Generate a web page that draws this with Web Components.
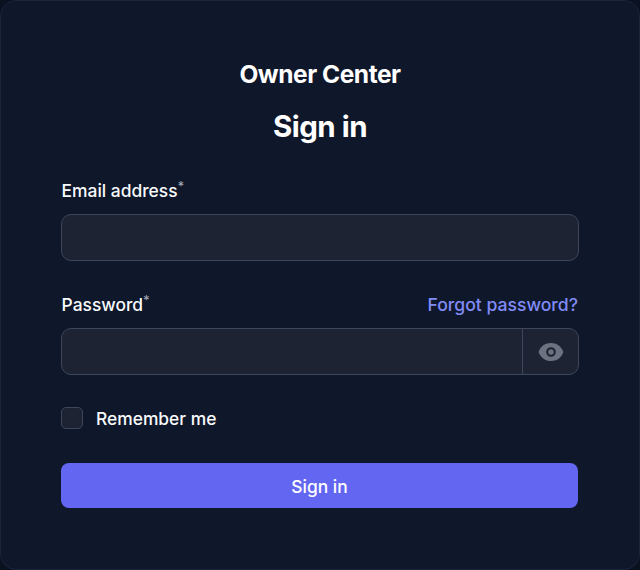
<!DOCTYPE html>
<html>
<head>
<meta charset="utf-8">
<title>Owner Center</title>
<style>
html, body { margin: 0; padding: 0; background: #0a1120; }
body { font-family: Inter, "Liberation Sans", sans-serif; color: #fff; }
</style>
</head>
<body>
<sign-in-card></sign-in-card>

<script>
class SignInCard extends HTMLElement {
    constructor() {
        super();
        this.attachShadow({ mode: "open" });
    }
    connectedCallback() {
        this.shadowRoot.innerHTML = `
        <style>
        :host {
            display: block;
            box-sizing: border-box;
            width: 640px;
            height: 570px;
            padding: 60px 60px 0 60px;
            background: #0f172a;
            border: 1px solid #1c2537;
            border-radius: 16px;
        }
        .app { margin: 0; height: 26px; line-height: 26px; font-size: 24.5px; font-weight: 650; text-align: center; letter-spacing: -0.45px; }
        .title { margin: 19px 0 0; height: 40px; line-height: 40px; font-size: 29.5px; font-weight: 650; text-align: center; letter-spacing: -0.5px; }
        form { display: block; margin-top: 32px; }
        text-field { margin-bottom: 31px; }
        check-row { margin-top: 1px; margin-bottom: 33px; }
        </style>
        <h2 class="app">Owner Center</h2>
        <h1 class="title">Sign in</h1>
        <form>
            <text-field label="Email address"></text-field>
            <text-field label="Password" forgot reveal></text-field>
            <check-row>Remember me</check-row>
            <primary-button>Sign in</primary-button>
        </form>`;
    }
}

class TextField extends HTMLElement {
    constructor() {
        super();
        this.attachShadow({ mode: "open" });
    }
    connectedCallback() {
        const forgot = this.hasAttribute("forgot");
        const reveal = this.hasAttribute("reveal");
        this.shadowRoot.innerHTML = `
        <style>
        :host { display: block; }
        .top { display: flex; justify-content: space-between; align-items: center; height: 24px; margin-bottom: 12px; padding: 0 1px 0 0.6px; }
        label { font-size: 17.4px; font-weight: 450; color: #f8fafc; line-height: 24px; padding-top: 1px; }
        sup { font-size: 13px; color: #9ca3af; line-height: 0; position: relative; top: 1px; vertical-align: super; }
        a { font-size: 17.6px; font-weight: 500; color: #818cf8; text-decoration: none; }
        .box { display: flex; height: 47px; box-sizing: border-box; border: 1px solid #3c475b; border-radius: 10px; background: #1e2333; overflow: hidden; }
        input { flex: 1; min-width: 0; border: 0; outline: 0; background: transparent; color: #fff; padding: 0 12px; }
        button { width: 56px; padding: 0; border: 0; border-left: 1px solid #3c475b; background: transparent; display: flex; align-items: center; justify-content: center; }
        svg { width: 26px; height: 26px; fill: #6b7280; }
        </style>
        <div class="top">
            <label>${this.getAttribute("label")}<sup>*</sup></label>
            ${forgot ? `<a href="#">Forgot password?</a>` : ""}
        </div>
        <div class="box">
            <input type="${reveal ? "password" : "email"}">
            ${reveal ? `<button type="button"><svg viewBox="0 0 20 20"><circle cx="10" cy="10" r="2.1"/><path fill-rule="evenodd" d="M.664 10.59a1.651 1.651 0 010-1.186A10.004 10.004 0 0110 3c4.257 0 7.893 2.66 9.336 6.41.147.381.146.804 0 1.186A10.004 10.004 0 0110 17c-4.257 0-7.893-2.66-9.336-6.41zM13.7 10a3.7 3.7 0 11-7.4 0 3.7 3.7 0 017.4 0z"/></svg></button>` : ""}
        </div>`;
    }
}

class CheckRow extends HTMLElement {
    constructor() {
        super();
        this.attachShadow({ mode: "open" });
    }
    connectedCallback() {
        this.shadowRoot.innerHTML = `
        <style>
        :host { display: flex; align-items: center; gap: 13px; height: 24px; }
        .box { width: 22px; height: 22px; box-sizing: border-box; border: 1px solid #3c475b; border-radius: 5px; background: #1e2333; }
        span { font-size: 17.4px; font-weight: 450; color: #f8fafc; }
        </style>
        <div class="box"></div>
        <span><slot></slot></span>`;
    }
}

class PrimaryButton extends HTMLElement {
    constructor() {
        super();
        this.attachShadow({ mode: "open" });
    }
    connectedCallback() {
        this.shadowRoot.innerHTML = `
        <style>
        :host { display: block; }
        button { display: block; width: 517px; height: 45px; padding: 1px 0 0; border: 0; border-radius: 8px; background: #6366f1; color: #fff; font: 500 17.4px Inter, "Liberation Sans", sans-serif; }
        </style>
        <button type="button"><slot></slot></button>`;
    }
}

customElements.define("text-field", TextField);
customElements.define("check-row", CheckRow);
customElements.define("primary-button", PrimaryButton);
customElements.define("sign-in-card", SignInCard);
</script>
</body>
</html>
